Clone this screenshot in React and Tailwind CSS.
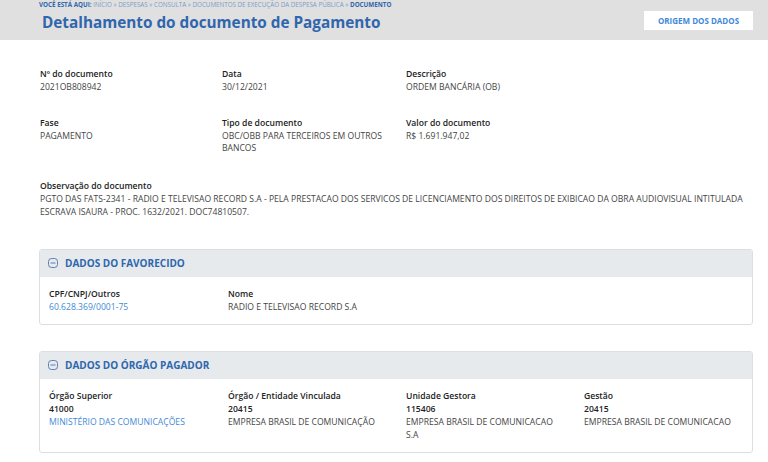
export default function App() {
  return (
    <div className="min-h-[462px] w-[768px] bg-white font-['Open_Sans',sans-serif] text-[#444]">
      {/* Header */}
      <div className="flex h-[40px] items-start justify-between bg-[#e0e0e0] pl-[39px] pr-[15px]">
        <div>
          <p className="pt-[1px] text-[6.25px] leading-[8px] text-[#7a9cc6]">
            <span className="font-bold text-[#2f66ad]">VOCÊ ESTÁ AQUI: </span>
            INÍCIO » DESPESAS » CONSULTA » DOCUMENTOS DE EXECUÇÃO DA DESPESA PÚBLICA »{" "}
            <span className="font-bold text-[#2f66ad]">DOCUMENTO</span>
          </p>
          <h1 className="mt-[3px] pl-[3px] text-[15.3px] font-bold leading-[20px] text-[#2f66ad]">
            Detalhamento do documento de Pagamento
          </h1>
        </div>
        <button className="mt-[11px] h-[19px] w-[109px] bg-white text-[8px] font-bold text-[#3f8ad8]">
          ORIGEM DOS DADOS
        </button>
      </div>

      {/* Fields */}
      <div className="pl-[40px] pr-[14px] pt-[28px] text-[8.6px] leading-[12.5px]">
        <div className="flex">
          <Field className="w-[182px]" label="Nº do documento" value="2021OB808942" />
          <Field className="w-[184px]" label="Data" value="30/12/2021" />
          <Field label="Descrição" value="ORDEM BANCÁRIA (OB)" />
        </div>
        <div className="mt-[24px] flex">
          <Field className="w-[182px]" label="Fase" value="PAGAMENTO" />
          <Field
            className="w-[184px] pr-[12px]"
            label="Tipo de documento"
            value="OBC/OBB PARA TERCEIROS EM OUTROS BANCOS"
          />
          <Field label="Valor do documento" value="R$ 1.691.947,02" />
        </div>
        <div className="mt-[25px] leading-[13px]">
          <Field
            label="Observação do documento"
            value="PGTO DAS FATS-2341 - RADIO E TELEVISAO RECORD S.A - PELA PRESTACAO DOS SERVICOS DE LICENCIAMENTO DOS DIREITOS DE EXIBICAO DA OBRA AUDIOVISUAL INTITULADA ESCRAVA ISAURA - PROC. 1632/2021. DOC74810507."
          />
        </div>
      </div>

      {/* Cards */}
      <div className="flex flex-col gap-[26px] pl-[39px] pr-[15px] pt-[30px]">
        <Card title="DADOS DO FAVORECIDO">
          <div className="flex pb-[10px]">
            <div className="w-[179px] flex-none">
              <p className="font-semibold text-[#222]">CPF/CNPJ/Outros</p>
              <p className="text-[#3f8ad8]">60.628.369/0001-75</p>
            </div>
            <div>
              <p className="font-semibold text-[#222]">Nome</p>
              <p>RADIO E TELEVISAO RECORD S.A</p>
            </div>
          </div>
        </Card>
        <Card title="DADOS DO ÓRGÃO PAGADOR">
          <div className="flex pb-[10px]">
            <Org className="w-[179px] flex-none pr-[10px]" label="Órgão Superior" code="41000" name="MINISTÉRIO DAS COMUNICAÇÕES" link />
            <Org className="w-[178px] flex-none pr-[10px]" label="Órgão / Entidade Vinculada" code="20415" name="EMPRESA BRASIL DE COMUNICAÇÃO" />
            <Org className="w-[178px] flex-none pr-[24px]" label="Unidade Gestora" code="115406" name="EMPRESA BRASIL DE COMUNICACAO S.A" />
            <Org className="min-w-0 flex-1" label="Gestão" code="20415" name="EMPRESA BRASIL DE COMUNICACAO" />
          </div>
        </Card>
      </div>
    </div>
  );
}

function Field({ label, value, className = "" }) {
  return (
    <div className={className}>
      <p className="font-semibold text-[#222]">{label}</p>
      <p>{value}</p>
    </div>
  );
}

function Card({ title, children }) {
  return (
    <div className="overflow-hidden rounded-[3px] border border-[#dcdfe2] text-[8.6px] leading-[13px]">
      <div className="flex h-[27px] items-center gap-[7px] bg-[#e6eaed] pl-[8px]">
        <svg width="10" height="10" viewBox="0 0 10 10" fill="none" stroke="#5a7fb0" strokeWidth="1">
          <rect x="0.5" y="0.5" width="9" height="9" rx="3" />
          <line x1="2.5" y1="5" x2="7.5" y2="5" />
        </svg>
        <span className="text-[10px] font-bold text-[#2f66ad]">{title}</span>
      </div>
      <div className="pl-[9px] pt-[11px]">{children}</div>
    </div>
  );
}

function Org({ label, code, name, link, className = "" }) {
  return (
    <div className={className}>
      <p className="font-semibold text-[#222]">{label}</p>
      <p className="font-semibold text-[#222]">{code}</p>
      <p className={link ? "text-[#3f8ad8]" : ""}>{name}</p>
    </div>
  );
}
